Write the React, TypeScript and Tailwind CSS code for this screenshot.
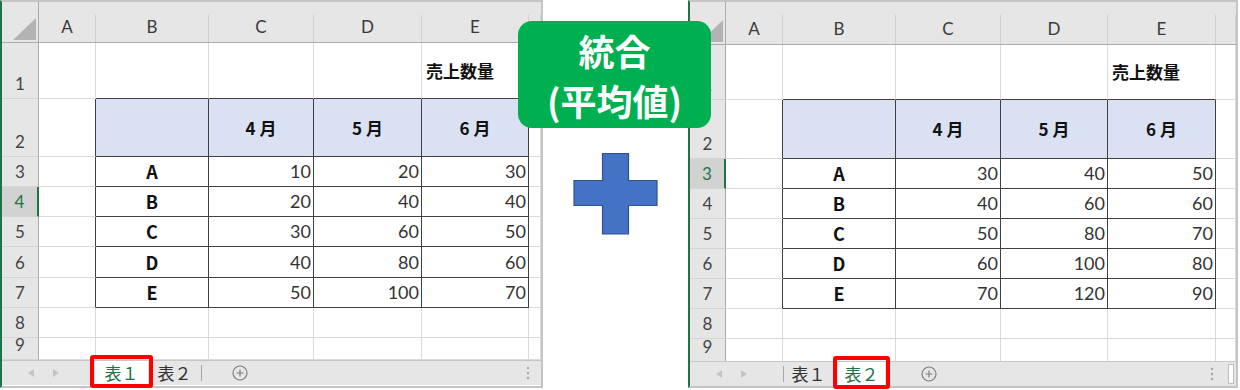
import React from "react";

const JP = "font-['Noto_Sans_CJK_JP',sans-serif]";
const NUM = "font-['Lato','Noto_Sans_CJK_JP',sans-serif]";
const LETTERS = ["A", "B", "C", "D", "E", ""];
const NAMES = ["A", "B", "C", "D", "E"];
const MONTHS = ["4 月", "5 月", "6 月"];

const leftValues = [
    [10, 20, 30],
    [20, 40, 40],
    [30, 60, 50],
    [40, 80, 60],
    [50, 100, 70],
];

const rightValues = [
    [30, 40, 50],
    [40, 60, 60],
    [50, 80, 70],
    [60, 100, 80],
    [70, 120, 90],
];

function CornerCell() {
    return (
        <div className="flex items-end justify-end border-r border-b border-[#ababab] bg-[#e6e6e6] pb-[2px] pr-[2px]">
            <svg width="23" height="22" viewBox="0 0 23 22">
                <polygon points="23,0 23,22 0,22" fill="#b3b3b3" />
            </svg>
        </div>
    );
}

function ColHeader({ letter }: { letter: string }) {
    return (
        <div className="flex flex-col border-b border-[#ababab] bg-[#e6e6e6] pt-[13px]">
            <div className={`flex flex-1 items-end justify-center border-r border-[#d0d0d0] pb-[3px] text-[17px] leading-[24px] text-[#3a3a3a] ${NUM}`}>
                {letter}
            </div>
        </div>
    );
}

function RowHeader({ n, selected }: { n: number; selected: boolean }) {
    return (
        <div
            className={`flex items-end justify-center border-b border-b-[#d4d4d4] pb-[2px] text-[17px] leading-[24px] ${NUM} ${selected
                ? "border-r-2 border-r-[#217346] bg-[#d2d2d2] text-[#217346]"
                : "border-r border-r-[#ababab] bg-[#e6e6e6] text-[#444]"
                }`}
        >
            {n}
        </div>
    );
}

function DataCell({ r, c, values }: { r: number; c: number; values: number[][] }) {
    const rightDark = r >= 2 && r <= 7 && c >= 1 && c <= 5;
    const bottomDark = r >= 1 && r <= 7 && c >= 2 && c <= 5;
    const border = `border-r border-b ${rightDark ? "border-r-[#404040]" : "border-r-[#dadada]"} ${bottomDark ? "border-b-[#404040]" : "border-b-[#dadada]"}`;

    if (r === 1 && c === 5) {
        return (
            <div className={`flex items-center pl-[4px] text-[17px] font-bold text-[#111] ${JP} ${border}`}>
                売上数量
            </div>
        );
    }
    if (r === 2 && c >= 2 && c <= 5) {
        return (
            <div className={`flex items-center justify-center bg-[#d9e1f2] text-[17px] font-bold text-[#111] ${JP} ${border}`}>
                {c >= 3 ? MONTHS[c - 3] : ""}
            </div>
        );
    }
    if (r >= 3 && r <= 7 && c === 2) {
        return (
            <div className={`flex items-center justify-center text-[18px] font-bold text-[#111] ${JP} ${border}`}>
                {NAMES[r - 3]}
            </div>
        );
    }
    if (r >= 3 && r <= 7 && c >= 3 && c <= 5) {
        return (
            <div className={`flex items-center justify-end pr-[2px] text-[18px] text-[#333] ${NUM} ${border}`}>
                {values[r - 3][c - 3]}
            </div>
        );
    }
    return <div className={border} />;
}

function Arrows() {
    return (
        <div className="flex w-[93px] shrink-0 items-center gap-[19px] pl-[26px]">
            <svg width="6" height="8" viewBox="0 0 6 8">
                <polygon points="6,0 6,8 0,4" fill="#c4c4c4" />
            </svg>
            <svg width="6" height="8" viewBox="0 0 6 8">
                <polygon points="0,0 0,8 6,4" fill="#c4c4c4" />
            </svg>
        </div>
    );
}

function AddSheet() {
    return (
        <svg width="16" height="16" viewBox="0 0 16 16">
            <circle cx="8" cy="8" r="7" fill="none" stroke="#7f7f7f" strokeWidth="1.2" />
            <path d="M8 4.5v7M4.5 8h7" stroke="#7f7f7f" strokeWidth="1.2" />
        </svg>
    );
}

function Dots() {
    return (
        <svg width="4" height="14" viewBox="0 0 4 14">
            <circle cx="2" cy="2" r="1.2" fill="#a6a6a6" />
            <circle cx="2" cy="7" r="1.2" fill="#a6a6a6" />
            <circle cx="2" cy="12" r="1.2" fill="#a6a6a6" />
        </svg>
    );
}

function ActiveTab({ label, width }: { label: string; width: string }) {
    return (
        <div className={`relative flex shrink-0 items-center justify-center bg-white text-[17px] text-[#217346] ${JP} ${width}`}>
            {label}
            <div className="absolute -inset-x-[5px] -top-[6px] -bottom-[3px] rounded-[3px] border-[4px] border-[#ff0000]" />
        </div>
    );
}

function Tab({ label, width }: { label: string; width: string }) {
    return (
        <div className={`flex shrink-0 items-center justify-center text-[17px] text-[#333] ${JP} ${width}`}>{label}</div>
    );
}

function Separator() {
    return <div className="my-[4px] w-px shrink-0 bg-[#a6a6a6]" />;
}

interface SheetProps {
    panelClass: string;
    gridClass: string;
    selectedRow: number;
    values: number[][];
    tabs: React.ReactNode;
}

function Sheet({ panelClass, gridClass, selectedRow, values, tabs }: SheetProps) {
    const rows = [1, 2, 3, 4, 5, 6, 7, 8, 9];
    return (
        <div className={`flex shrink-0 flex-col border-t-2 border-b-2 border-l-2 border-r-2 border-t-[#c4c4c4] border-b-[#c4c4c4] border-r-[#c4c4c4] border-l-[#217346] bg-white ${panelClass}`}>
            <div className={`grid overflow-hidden ${gridClass}`}>
                <CornerCell />
                {LETTERS.map((l, i) => (
                    <ColHeader key={i} letter={l} />
                ))}
                {rows.map((r) => (
                    <React.Fragment key={r}>
                        <RowHeader n={r} selected={r === selectedRow} />
                        {[1, 2, 3, 4, 5, 6].map((c) => (
                            <DataCell key={c} r={r} c={c} values={values} />
                        ))}
                    </React.Fragment>
                ))}
            </div>
            <div className="flex h-[25px] items-stretch border-t border-[#c6c6c6] bg-[#e6e6e6]">{tabs}</div>
        </div>
    );
}

export default function App() {
    return (
        <div className="relative flex h-[390px] w-[1240px] items-start overflow-hidden bg-white">
            <Sheet
                panelClass="w-[543px] h-[388px]"
                gridClass="grid-cols-[37px_57px_113px_105px_108px_107px_1fr] grid-rows-[41px_56px_58px_30px_30px_30px_31px_30px_30px_22px]"
                selectedRow={4}
                values={leftValues}
                tabs={
                    <>
                        <Arrows />
                        <ActiveTab label="表１" width="w-[53px]" />
                        <Tab label="表２" width="w-[53px]" />
                        <Separator />
                        <div className="flex w-[76px] shrink-0 items-center justify-center">
                            <AddSheet />
                        </div>
                        <div className="flex flex-1 items-center justify-end pr-[11px]">
                            <Dots />
                        </div>
                    </>
                }
            />

            <div className="flex w-[145px] shrink-0 justify-center pt-[153px]">
                <svg width="85" height="82" viewBox="0 0 85 82">
                    <polygon
                        points="29.5,0.5 55.5,0.5 55.5,27.5 84,27.5 84,52.5 55.5,52.5 55.5,81 29.5,81 29.5,52.5 1,52.5 1,27.5 29.5,27.5"
                        fill="#4472c4"
                        stroke="#2f528f"
                        strokeWidth="1.2"
                    />
                </svg>
            </div>

            <Sheet
                panelClass="w-[550px] h-[388px]"
                gridClass="grid-cols-[36px_57px_113px_105px_107px_108px_1fr] grid-rows-[43px_55px_59px_30px_30px_30px_30px_30px_30px_23px]"
                selectedRow={3}
                values={rightValues}
                tabs={
                    <>
                        <Arrows />
                        <Separator />
                        <Tab label="表１" width="w-[49px]" />
                        <div className="w-[5px] shrink-0" />
                        <ActiveTab label="表２" width="w-[47px]" />
                        <div className="flex w-[87px] shrink-0 items-center justify-center">
                            <AddSheet />
                        </div>
                        <div className="flex flex-1 items-center justify-end gap-[14px] pr-[2px]">
                            <Dots />
                            <div className="h-[20px] w-[6px] border border-[#bdbdbd] bg-white" />
                        </div>
                    </>
                }
            />

            <div
                className={`absolute left-[518px] top-[21px] flex h-[107px] w-[193px] flex-col items-center justify-center rounded-[14px] bg-[#00b050] text-[36px] font-bold leading-[50px] text-white ${JP}`}
            >
                <span>統合</span>
                <span>(平均値)</span>
            </div>
        </div>
    );
}
